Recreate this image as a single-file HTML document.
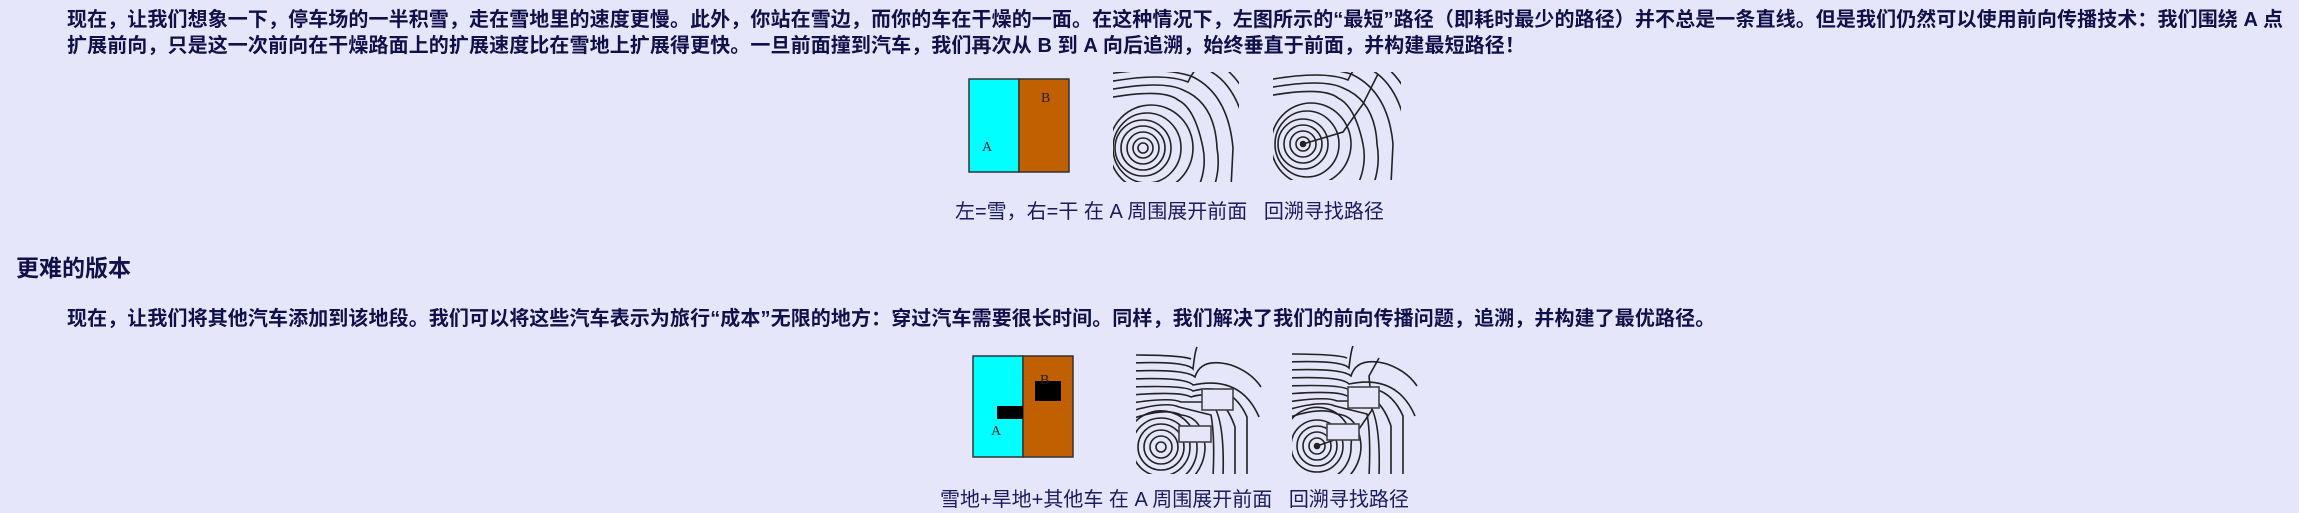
<!DOCTYPE html>
<html><head><meta charset="utf-8"><style>
html,body{margin:0;padding:0;background:#e6e6fa;width:2299px;height:513px;overflow:hidden}
body{font-family:"Liberation Sans","Noto Sans CJK SC",sans-serif;color:#10104a}
.p{position:absolute;left:67px;font-weight:bold;font-size:20px;line-height:26px;white-space:nowrap;letter-spacing:0.1px}
.h{position:absolute;left:16px;top:255px;font-weight:bold;font-size:23px;line-height:26px;white-space:nowrap}
.cap{position:absolute;font-size:20px;line-height:24px;white-space:nowrap;color:#1a1a60}
svg{position:absolute}
</style></head><body>
<div class="p" style="top:7px">现在，让我们想象一下，停车场的一半积雪，走在雪地里的速度更慢。此外，你站在雪边，而你的车在干燥的一面。在这种情况下，左图所示的“最短”路径（即耗时最少的路径）并不总是一条直线。但是我们仍然可以使用前向传播技术：我们围绕 A 点<br>扩展前向，只是这一次前向在干燥路面上的扩展速度比在雪地上扩展得更快。一旦前面撞到汽车，我们再次从 B 到 A 向后追溯，始终垂直于前面，并构建最短路径！</div>

<svg style="left:968px;top:78px" width="103" height="96"><rect x="1" y="1" width="50" height="93" fill="#00ffff" stroke="#333" stroke-width="1.5"/><rect x="51" y="1" width="50" height="93" fill="#c06000" stroke="#333" stroke-width="1.5"/><text x="73" y="24" font-family="Liberation Serif" font-size="14" fill="#222">B</text><text x="14" y="73" font-family="Liberation Serif" font-size="14" fill="#222">A</text></svg>

<svg style="left:1113px;top:72px" width="126" height="110" fill="none" stroke="#222" stroke-width="1.6">
<defs><clipPath id="c1"><rect x="0" y="0" width="126" height="110"/></clipPath></defs>
<g clip-path="url(#c1)"><g transform="translate(30,76)">
<circle r="5"/><circle r="10"/><circle r="16"/><circle r="22"/><circle r="28"/>
<ellipse cx="4" cy="0" rx="34" ry="35"/>
<ellipse cx="8" cy="0" rx="42" ry="43"/>
<path d="M-35,-50 Q20,-60 35,-48 Q52,-40 60,0 A64,64 0 0 1 40,60"/>
<path d="M-35,-58 Q20,-68 40,-58 Q72,-45 74,0 A78,78 0 0 1 60,60"/>
<path d="M-35,-66 Q20,-76 45,-66 L48,-72 Q85,-55 90,0 L88,40"/>
<path d="M-35,-74 Q15,-82 48,-72 L55,-82 Q95,-70 104,-10"/>
<path d="M-35,-82 Q15,-90 50,-82 L56,-92 Q100,-82 115,-20"/>
</g></g></svg>

<svg style="left:1273px;top:72px" width="128" height="108" fill="none" stroke="#222" stroke-width="1.6">
<defs><clipPath id="c2"><rect x="0" y="0" width="128" height="108"/></clipPath></defs>
<g clip-path="url(#c2)"><g transform="translate(30,72)">
<circle r="2.5" fill="#222"/><circle r="7"/><circle r="13"/><circle r="19"/><circle r="25"/>
<ellipse cx="4" cy="0" rx="32" ry="33"/>
<ellipse cx="8" cy="0" rx="40" ry="41"/>
<path d="M-35,-48 Q20,-58 35,-46 Q52,-38 60,0 A64,64 0 0 1 40,60"/>
<path d="M-35,-56 Q20,-66 40,-56 Q72,-43 74,0 A78,78 0 0 1 60,60"/>
<path d="M-35,-64 Q20,-74 45,-64 L48,-70 Q85,-53 90,0 L88,40"/>
<path d="M-35,-72 Q15,-80 48,-70 L55,-80 Q95,-68 104,-10"/>
<path d="M-35,-80 Q15,-88 50,-80 L56,-90 Q100,-80 115,-20"/>
<path d="M0,0 L40,-12 L60,-40 L75,-70"/>
</g></g></svg>

<div class="cap" style="left:955px;top:200px">左=雪，右=干 在 A 周围展开前面&nbsp;&nbsp; 回溯寻找路径</div>

<div class="h">更难的版本</div>
<div class="p" style="top:306px">现在，让我们将其他汽车添加到该地段。我们可以将这些汽车表示为旅行“成本”无限的地方：穿过汽车需要很长时间。同样，我们解决了我们的前向传播问题，追溯，并构建了最优路径。</div>

<svg style="left:972px;top:355px" width="104" height="104"><rect x="1" y="1" width="50" height="101" fill="#00ffff" stroke="#333" stroke-width="1.5"/><rect x="51" y="1" width="50" height="101" fill="#c06000" stroke="#333" stroke-width="1.5"/><rect x="25" y="51" width="26" height="13" fill="#000"/><rect x="63" y="26" width="26" height="20" fill="#000"/><text x="68" y="29" font-family="Liberation Serif" font-size="14" fill="#222">B</text><text x="19" y="80" font-family="Liberation Serif" font-size="14" fill="#222">A</text></svg>

<svg style="left:1136px;top:346px" width="126" height="128" fill="none" stroke="#222" stroke-width="1.6">
<defs><clipPath id="c3"><rect x="0" y="0" width="126" height="128"/></clipPath></defs>
<g clip-path="url(#c3)"><g transform="translate(25,101)">
<circle r="5"/><circle r="11"/><circle r="17"/><circle r="23"/><circle r="29"/>
<path d="M-30,-20 A36,36 0 0 1 36,0 A36,36 0 0 1 -10,36"/>
<path d="M-30,-28 Q5,-40 20,-32 Q42,-30 44,0 A44,44 0 0 1 0,44"/>
<path d="M-30,-36 Q5,-46 18,-40 L50,-32 Q54,-10 52,30"/>
<path d="M-30,-44 Q10,-50 20,-45 L50,-45 Q64,-30 62,30"/>
<path d="M-30,-52 Q20,-56 30,-50 Q60,-60 74,-20 L74,30"/>
<path d="M-30,-60 Q25,-62 32,-56 Q70,-66 86,-30 L86,30"/>
<path d="M-30,-68 Q25,-70 32,-62 Q80,-72 98,-30"/>
<path d="M-30,-76 Q25,-78 34,-70 Q40,-90 70,-82 Q90,-75 100,-60"/>
<path d="M-30,-84 Q25,-86 32,-78 Q34,-96 36,-100"/>
<path d="M-30,-92 Q20,-92 30,-88"/>
</g></g>
<rect x="43" y="80" width="32" height="16" fill="#e6e6fa" stroke="#444"/><rect x="66" y="43" width="31" height="21" fill="#e6e6fa" stroke="#444"/>
</svg>

<svg style="left:1292px;top:346px" width="130" height="128" fill="none" stroke="#222" stroke-width="1.6">
<defs><clipPath id="c4"><rect x="0" y="0" width="130" height="128"/></clipPath></defs>
<g clip-path="url(#c4)"><g transform="translate(25,100)">
<circle r="2.5" fill="#222"/><circle r="8"/><circle r="14"/><circle r="20"/><circle r="26"/>
<path d="M-30,-20 A34,34 0 0 1 34,0 A34,34 0 0 1 -10,34"/>
<path d="M-30,-28 Q5,-40 20,-32 Q42,-30 44,0 A44,44 0 0 1 0,44"/>
<path d="M-30,-36 Q5,-46 18,-40 L50,-32 Q54,-10 52,30"/>
<path d="M-30,-44 Q10,-50 20,-45 L50,-45 Q64,-30 62,30"/>
<path d="M-30,-52 Q20,-56 30,-50 Q60,-60 74,-20 L74,30"/>
<path d="M-30,-60 Q25,-62 32,-56 Q70,-66 86,-30 L86,30"/>
<path d="M-30,-68 Q25,-70 32,-62 Q80,-72 98,-30"/>
<path d="M-30,-76 Q25,-78 34,-70 Q40,-90 70,-82 Q90,-75 100,-60"/>
<path d="M-30,-84 Q25,-86 32,-78 Q34,-96 36,-100"/>
<path d="M-30,-92 Q20,-92 30,-88"/>
<path d="M0,0 L40,-14 L55,-36 L52,-70 L62,-88"/>
</g></g>
<rect x="35" y="78" width="32" height="16" fill="#e6e6fa" stroke="#444"/><rect x="56" y="41" width="31" height="21" fill="#e6e6fa" stroke="#444"/>
</svg>

<div class="cap" style="left:940px;top:488px">雪地+旱地+其他车 在 A 周围展开前面&nbsp;&nbsp; 回溯寻找路径</div>
</body></html>
